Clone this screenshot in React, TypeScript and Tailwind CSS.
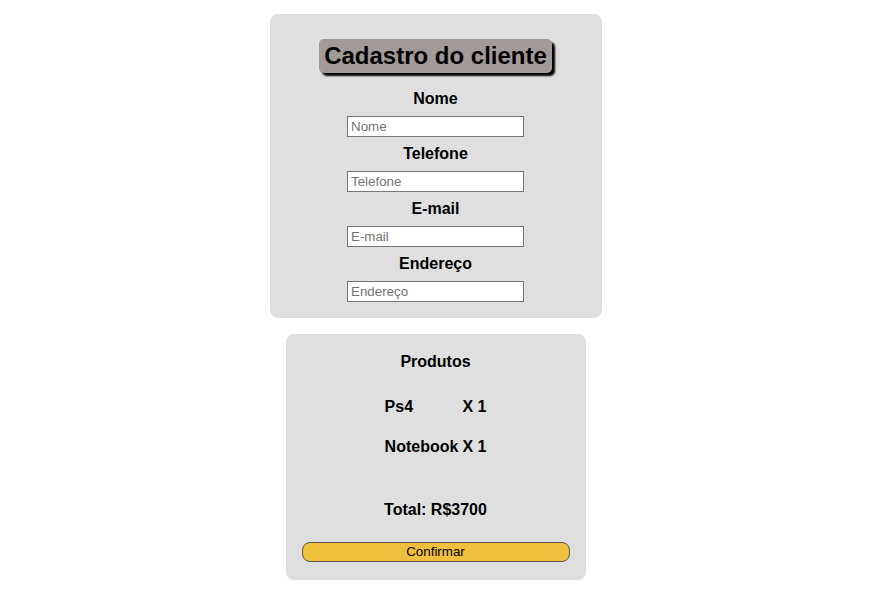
const fields = ["Nome", "Telefone", "E-mail", "Endereço"];

const produtos = [
  { nome: "Ps4", qtd: "X 1" },
  { nome: "Notebook", qtd: "X 1" },
];

export default function App() {
  return (
    <div
      className="min-h-screen bg-white flex flex-col items-center pt-[14px] gap-4 text-black"
      style={{ fontFamily: "'Liberation Sans', Arial, sans-serif" }}
    >
      {/* Cadastro */}
      <div className="w-[332px] bg-[#dfdfdf] rounded-lg flex flex-col items-center pt-[25px] pb-4">
        <h1 className="h-[34px] px-[5px] flex items-center bg-[#a29a98] rounded-[5px] text-[24px] font-bold leading-none shadow-[3px_3px_2px_#000] mb-[17px]">
          Cadastro do cliente
        </h1>
        {fields.map((f, i) => (
          <div key={f} className={`flex flex-col items-center ${i > 0 ? "mt-[8px]" : ""}`}>
            <label className="text-base font-bold leading-[18px]">{f}</label>
            <input
              placeholder={f}
              className="mt-[8px] w-[177px] h-[21px] bg-white border border-[#767676] px-[3px] text-[13.33px] placeholder:text-[#757575] outline-none"
            />
          </div>
        ))}
      </div>

      {/* Produtos */}
      <div className="w-[300px] bg-[#dfdfdf] rounded-lg flex flex-col items-center pt-[19px] pb-[18px] px-4">
        <h2 className="text-base font-bold leading-[18px]">Produtos</h2>
        <table className="mt-[27px] text-base font-bold">
          <tbody>
            {produtos.map((p, i) => (
              <tr key={p.nome}>
                <td className={`text-left leading-[18px] p-0 pr-1 ${i > 0 ? "pt-[22px]" : ""}`}>{p.nome}</td>
                <td className={`text-left leading-[18px] p-0 ${i > 0 ? "pt-[22px]" : ""}`}>{p.qtd}</td>
              </tr>
            ))}
          </tbody>
        </table>
        <p className="mt-[45px] text-base font-bold leading-[18px]">Total: R$3700</p>
        <button className="mt-[23px] w-full h-[20px] bg-[#f0bf3e] border border-[#555] rounded-lg text-[13.33px] leading-none">
          Confirmar
        </button>
      </div>
    </div>
  );
}
